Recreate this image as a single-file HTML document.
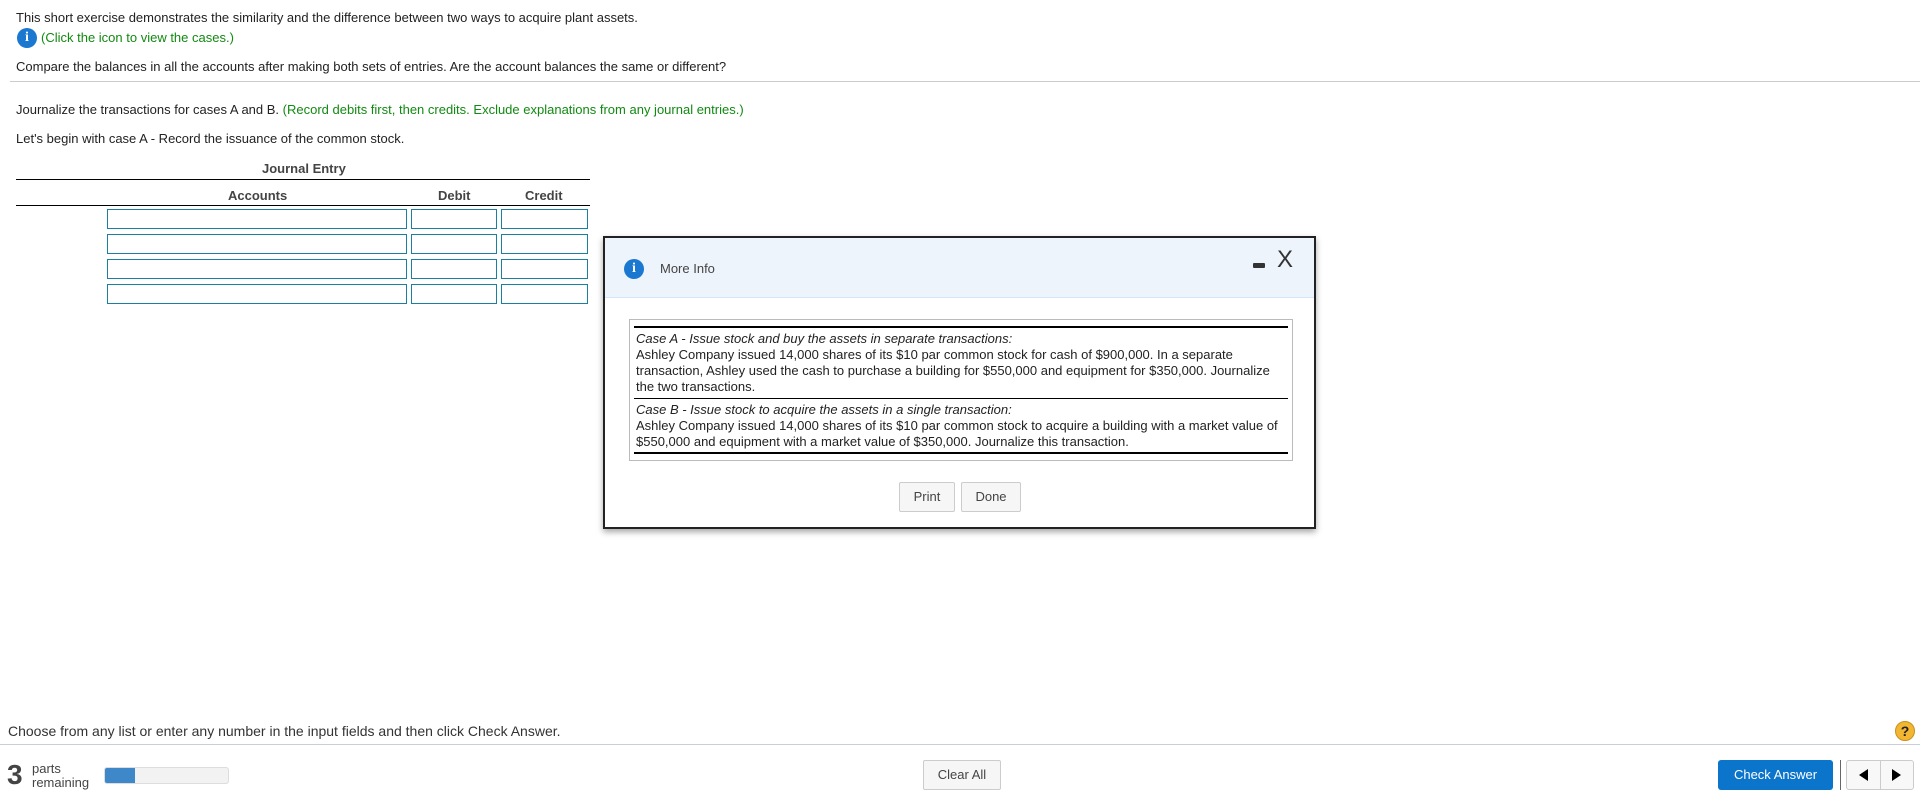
<!DOCTYPE html>
<html><head><meta charset="utf-8"><style>
*{margin:0;padding:0;box-sizing:border-box}
body{width:1920px;height:803px;position:relative;background:#fff;font-family:"Liberation Sans",Arial,sans-serif;font-size:13px;color:#222;overflow:hidden}
.a{position:absolute;white-space:nowrap}
.g{color:#118a11}
.inp{position:absolute;border:1px solid #1a7fa0;height:20px;background:#fff}
.ic{position:absolute;width:20px;height:20px;border-radius:50%;background:#1a78d0;color:#fff;font:bold 14px "Liberation Serif",serif;text-align:center;line-height:20px}
.btn{position:absolute;border:1px solid #ccc;background:#f6f6f6;border-radius:2px;text-align:center;color:#444;font-size:13px}
</style></head><body>
<div class="a" style="left:16px;top:10px">This short exercise demonstrates the similarity and the difference between two ways to acquire plant assets.</div>
<div class="ic" style="left:17px;top:28px">i</div>
<div class="a g" style="left:41px;top:30px">(Click the icon to view the cases.)</div>
<div class="a" style="left:16px;top:59px">Compare the balances in all the accounts after making both sets of entries. Are the account balances the same or different?</div>
<div class="a" style="left:10px;top:81px;width:1910px;height:1px;background:#ccc"></div>
<div class="a" style="left:16px;top:102px">Journalize the transactions for cases A and B. <span class="g">(Record debits first, then credits. Exclude explanations from any journal entries.)</span></div>
<div class="a" style="left:16px;top:131px">Let's begin with case A - Record the issuance of the common stock.</div>
<div class="a" style="left:262px;top:161px;font-weight:bold;color:#444">Journal Entry</div>
<div class="a" style="left:16px;top:179px;width:574px;height:1px;background:#000"></div>
<div class="a" style="left:228px;top:188px;font-weight:bold;color:#444">Accounts</div>
<div class="a" style="left:438px;top:188px;font-weight:bold;color:#444">Debit</div>
<div class="a" style="left:525px;top:188px;font-weight:bold;color:#444">Credit</div>
<div class="a" style="left:16px;top:205px;width:574px;height:1px;background:#000"></div>
<div class="inp" style="left:107px;top:209px;width:300px"></div><div class="inp" style="left:411px;top:209px;width:86px"></div><div class="inp" style="left:501px;top:209px;width:87px"></div>
<div class="inp" style="left:107px;top:234px;width:300px"></div><div class="inp" style="left:411px;top:234px;width:86px"></div><div class="inp" style="left:501px;top:234px;width:87px"></div>
<div class="inp" style="left:107px;top:259px;width:300px"></div><div class="inp" style="left:411px;top:259px;width:86px"></div><div class="inp" style="left:501px;top:259px;width:87px"></div>
<div class="inp" style="left:107px;top:284px;width:300px"></div><div class="inp" style="left:411px;top:284px;width:86px"></div><div class="inp" style="left:501px;top:284px;width:87px"></div>

<div class="a" style="left:603px;top:236px;width:713px;height:293px;border:2px solid #222;background:#fff;box-shadow:0 3px 6px rgba(0,0,0,.35)">
<div style="position:absolute;left:0;top:0;right:0;height:60px;background:#eef4fc;border-bottom:1px solid #d4e6f8"></div>
<div class="ic" style="left:19px;top:21px">i</div>
<div class="a" style="left:55px;top:23px;font-size:13px;color:#444">More Info</div>
<div class="a" style="left:648px;top:25px;width:12px;height:5px;background:#333;border-radius:1px"></div>
<div class="a" style="left:672px;top:8px;font-size:24px;color:#333">X</div>
<div class="a" style="left:24px;top:81px;width:664px;height:142px;border:1px solid #bbb"></div>
<div class="a" style="left:29px;top:88px;width:654px;height:2px;background:#000"></div>
<div class="a" style="left:31px;top:93px;line-height:16px;white-space:normal;width:650px;font-size:13px"><i>Case A - Issue stock and buy the assets in separate transactions:</i><br>Ashley Company issued 14,000 shares of its $10 par common stock for cash of $900,000. In a separate<br>transaction, Ashley used the cash to purchase a building for $550,000 and equipment for $350,000. Journalize<br>the two transactions.</div>
<div class="a" style="left:29px;top:160px;width:654px;height:1px;background:#000"></div>
<div class="a" style="left:31px;top:164px;line-height:16px;white-space:normal;width:650px;font-size:13px"><i>Case B - Issue stock to acquire the assets in a single transaction:</i><br>Ashley Company issued 14,000 shares of its $10 par common stock to acquire a building with a market value of<br>$550,000 and equipment with a market value of $350,000. Journalize this transaction.</div>
<div class="a" style="left:29px;top:214px;width:654px;height:2px;background:#000"></div>
<div class="btn" style="left:294px;top:244px;width:56px;height:30px;line-height:28px">Print</div>
<div class="btn" style="left:356px;top:244px;width:60px;height:30px;line-height:28px">Done</div>
</div>

<div class="a" style="left:8px;top:723px;color:#333;font-size:14px">Choose from any list or enter any number in the input fields and then click Check Answer.</div>
<div class="a" style="left:1895px;top:721px;width:20px;height:20px;border-radius:50%;background:#f2b632;border:1px solid #c8901a;text-align:center;font-weight:bold;font-size:14px;line-height:18px;color:#222">?</div>
<div class="a" style="left:0;top:744px;width:1920px;height:1px;background:#c9cedd"></div>
<div class="a" style="left:7px;top:760px;font-size:28px;font-weight:bold;color:#444;line-height:30px">3</div>
<div class="a" style="left:32px;top:762px;font-size:13px;color:#444;line-height:14px">parts<br>remaining</div>
<div class="a" style="left:104px;top:767px;width:125px;height:17px;background:#f2f2f2;border:1px solid #ddd;border-radius:3px;overflow:hidden"><div style="width:30px;height:100%;background:#3e87c8"></div></div>
<div class="btn" style="left:923px;top:760px;width:78px;height:30px;line-height:28px">Clear All</div>
<div class="a" style="left:1718px;top:760px;width:115px;height:30px;background:#0b74cb;border-radius:3px;color:#fff;font-size:13px;text-align:center;line-height:30px">Check Answer</div>
<div class="a" style="left:1840px;top:760px;width:1px;height:30px;background:#666"></div>
<div class="a" style="left:1846px;top:760px;width:68px;height:30px;border:1px solid #ccc;border-radius:3px;background:#f8f8f8">
<div class="a" style="left:33px;top:0;width:1px;height:28px;background:#ccc"></div>
<div class="a" style="left:12px;top:8px;width:0;height:0;border-top:6px solid transparent;border-bottom:6px solid transparent;border-right:9px solid #000"></div>
<div class="a" style="left:45px;top:8px;width:0;height:0;border-top:6px solid transparent;border-bottom:6px solid transparent;border-left:9px solid #000"></div>
</div>
</body></html>
